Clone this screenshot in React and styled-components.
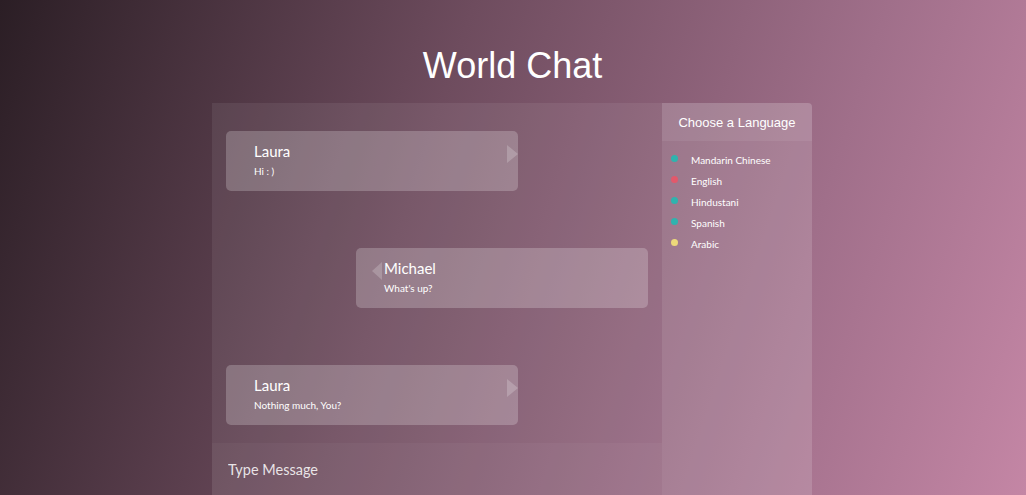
import styled, { createGlobalStyle } from "styled-components";

const GlobalStyle = createGlobalStyle`
  html, body {
    margin: 0;
    height: 100%;
    overflow: hidden;
  }
  body {
    background: linear-gradient(108deg, #2b1e25 0%, #6e4c5e 40%, #a06f8a 75%, #c486a5 100%);
    font-family: "Liberation Sans", Arial, sans-serif;
  }
`;

const Page = styled.div`
  min-height: 100vh;
  display: flex;
  flex-direction: column;
  align-items: center;
  padding-top: 45px;
  box-sizing: border-box;
`;

const Title = styled.h1`
  margin: 0 0 17px -1px;
  font-family: "Liberation Sans", Arial, sans-serif;
  font-weight: 400;
  font-size: 36px;
  line-height: 41px;
  color: #fff;
`;

const Card = styled.div`
  width: 600px;
  height: 400px;
  margin-left: -2px;
  display: flex;
`;

const ChatColumn = styled.div`
  width: 450px;
  display: flex;
  flex-direction: column;
`;

const Messages = styled.div`
  height: 340px;
  box-sizing: border-box;
  padding: 28px 14px 18px;
  display: flex;
  flex-direction: column;
  gap: 57px;
  background: rgba(255, 255, 255, 0.07);
`;

const Bubble = styled.div`
  position: relative;
  width: 292px;
  height: 60px;
  box-sizing: border-box;
  padding: 10px 28px;
  align-self: ${(p) => (p.$mine ? "flex-end" : "flex-start")};
  background: rgba(255, 255, 255, 0.22);
  border-radius: 5px;
  font-family: "Lato", "Nunito", sans-serif;
  color: #fff;
`;

const Arrow = styled.span`
  position: absolute;
  top: 14px;
  width: 0;
  height: 0;
  border-top: 9px solid transparent;
  border-bottom: 9px solid transparent;
  ${(p) =>
    p.$left
      ? `left: 16px; border-right: 10px solid rgba(255, 255, 255, 0.2);`
      : `right: 0; border-left: 11px solid rgba(255, 255, 255, 0.2);`}
`;

const Name = styled.div`
  font-size: 15px;
  line-height: 20px;
  margin-bottom: 3px;
`;

const Text = styled.div`
  font-size: 10px;
  line-height: 14px;
`;

const InputBar = styled.div`
  flex: 1;
  display: flex;
  align-items: center;
  padding: 0 16px 8px;
  background: rgba(255, 255, 255, 0.1);
`;

const InputField = styled.input`
  width: 100%;
  border: none;
  outline: none;
  background: transparent;
  font-family: "Lato", "Nunito", sans-serif;
  font-size: 14.5px;
  color: #fff;
  padding: 0;

  &::placeholder {
    color: rgba(255, 255, 255, 0.85);
  }
`;

const Sidebar = styled.div`
  width: 150px;
  background: rgba(255, 255, 255, 0.15);
  border-top-right-radius: 4px;
  display: flex;
  flex-direction: column;
`;

const SidebarHeader = styled.div`
  height: 38px;
  display: flex;
  align-items: center;
  justify-content: center;
  background: rgba(255, 255, 255, 0.07);
  border-top-right-radius: 4px;
  font-family: "Liberation Sans", Arial, sans-serif;
  font-size: 13px;
  color: #fff;
`;

const LanguageList = styled.ul`
  list-style: none;
  margin: 0;
  padding: 8px 0 0 9px;
`;

const Language = styled.li`
  height: 21px;
  display: flex;
  align-items: center;
  gap: 13px;
  font-family: "Lato", "Nunito", sans-serif;
  font-size: 10px;
  color: #fff;
`;

const Dot = styled.span`
  width: 7px;
  height: 7px;
  border-radius: 50%;
  background: ${(p) => p.$color};
  margin-top: -2px;
`;

const messages = [
  { name: "Laura", text: "Hi : )" },
  { name: "Michael", text: "What's up?", mine: true },
  { name: "Laura", text: "Nothing much, You?" },
];

const languages = [
  { name: "Mandarin Chinese", color: "#2fb3ae" },
  { name: "English", color: "#e2596b" },
  { name: "Hindustani", color: "#2fb3ae" },
  { name: "Spanish", color: "#2fb3ae" },
  { name: "Arabic", color: "#ecd97a" },
];

function App() {
  return (
    <>
      <GlobalStyle />
      <Page>
        <Title>World Chat</Title>
        <Card>
          <ChatColumn>
            <Messages>
              {messages.map((m, i) => (
                <Bubble key={i} $mine={m.mine}>
                  <Arrow $left={m.mine} />
                  <Name>{m.name}</Name>
                  <Text>{m.text}</Text>
                </Bubble>
              ))}
            </Messages>
            <InputBar>
              <InputField placeholder="Type Message" />
            </InputBar>
          </ChatColumn>
          <Sidebar>
            <SidebarHeader>Choose a Language</SidebarHeader>
            <LanguageList>
              {languages.map((l) => (
                <Language key={l.name}>
                  <Dot $color={l.color} />
                  {l.name}
                </Language>
              ))}
            </LanguageList>
          </Sidebar>
        </Card>
      </Page>
    </>
  );
}

export default App;
